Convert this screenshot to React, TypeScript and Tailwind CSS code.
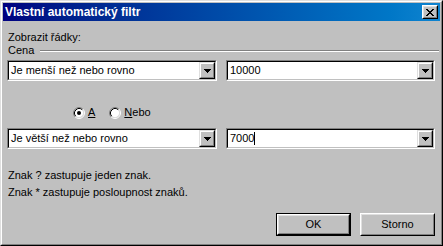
const font = "font-['Liberation_Sans',Arial,sans-serif]";

function DropButton() {
  return (
    <div className="flex h-full w-[16px] border border-t-[#dfdfdf] border-l-[#dfdfdf] border-b-black border-r-black bg-[#c0c0c0]">
      <div className="flex flex-1 items-center justify-center border border-t-white border-l-white border-b-[#808080] border-r-[#808080]">
        <svg width="7" height="4" viewBox="0 0 7 4" shapeRendering="crispEdges">
          <path d="M0 0h7v1H0zM1 1h5v1H1zM2 2h3v1H2zM3 3h1v1H3z" fill="#000" />
        </svg>
      </div>
    </div>
  );
}

function Combo({ value, cursor, className = "" }: { value: string; cursor?: boolean; className?: string }) {
  return (
    <div className={`flex h-[21px] border border-t-[#808080] border-l-[#808080] border-b-white border-r-white ${className}`}>
      <div className="flex flex-1 border border-t-black border-l-black border-b-[#c0c0c0] border-r-[#c0c0c0] bg-white">
        <div className="flex flex-1 items-center pl-[2px] text-[11px] leading-[13px] text-black">
          {value}
          {cursor && <span className="inline-block h-[13px] w-px bg-black" />}
        </div>
        <DropButton />
      </div>
    </div>
  );
}

function Radio({ checked }: { checked?: boolean }) {
  return (
    <svg width="12" height="12" viewBox="0 0 12 12">
      <circle cx="6" cy="6" r="4.5" fill="#fff" />
      <path d="M2.11 9.89A5.5 5.5 0 0 1 9.89 2.11" stroke="#808080" fill="none" />
      <path d="M9.89 2.11A5.5 5.5 0 0 1 2.11 9.89" stroke="#fff" fill="none" />
      <path d="M2.82 9.18A4.5 4.5 0 0 1 9.18 2.82" stroke="#000" fill="none" />
      <path d="M9.18 2.82A4.5 4.5 0 0 1 2.82 9.18" stroke="#dfdfdf" fill="none" />
      {checked && <circle cx="6" cy="6" r="2" fill="#000" />}
    </svg>
  );
}

function Button({ label, isDefault }: { label: string; isDefault?: boolean }) {
  const body = (
    <div className="flex flex-1 border border-t-white border-l-white border-b-black border-r-black">
      <div className="flex flex-1 items-center justify-center border border-t-[#dfdfdf] border-l-[#dfdfdf] border-b-[#808080] border-r-[#808080] text-[11px] leading-[13px] text-black">
        {label}
      </div>
    </div>
  );
  return isDefault ? (
    <div className="flex h-[23px] w-[75px] border border-black">{body}</div>
  ) : (
    <div className="flex h-[23px] w-[75px]">{body}</div>
  );
}

export default function App() {
  return (
    <div className={`${font} h-[246px] w-[443px] border border-t-[#dfdfdf] border-l-[#dfdfdf] border-b-black border-r-black bg-[#c0c0c0]`}>
      <div className="flex h-full flex-col border border-t-white border-l-white border-b-[#808080] border-r-[#808080] p-px">
        {/* Title bar */}
        <div className="flex h-[18px] items-center justify-between bg-gradient-to-r from-[#000080] to-[#1084d0] pl-[2px] pr-[2px]">
          <span className="text-[12px] font-bold leading-[14px] text-white">Vlastní automatický filtr</span>
          <div className="flex h-[14px] w-[16px] border border-t-white border-l-white border-b-black border-r-black bg-[#c0c0c0]">
            <div className="flex flex-1 items-center justify-center border border-t-[#dfdfdf] border-l-[#dfdfdf] border-b-[#808080] border-r-[#808080]">
              <svg width="8" height="7" viewBox="0 0 8 7" shapeRendering="crispEdges">
                <path d="M0 0h2v1H0zM1 1h2v1H1zM2 2h2v1H2zM3 3h2v1H3zM2 4h2v1H2zM1 5h2v1H1zM0 6h2v1H0zM6 0h2v1H6zM5 1h2v1H5zM4 2h2v1H4zM4 4h2v1H4zM5 5h2v1H5zM6 6h2v1H6z" fill="#000" />
              </svg>
            </div>
          </div>
        </div>

        {/* Content */}
        <div className="flex flex-col pl-[4px] pr-[5px] text-[11px] leading-[13px] text-black">
          <div className="mt-[10px] pl-[1px]">Zobrazit řádky:</div>
          <div className="flex h-[13px] items-center pl-[1px]">
            <span>Cena</span>
            <div className="-mr-[4px] ml-[6px] h-[2px] flex-1 border-t border-b border-t-[#808080] border-b-white" />
          </div>

          <div className="mt-[3px] flex gap-[9px]">
            <Combo value="Je menší než nebo rovno" className="w-[210px]" />
            <Combo value="10000" className="flex-1" />
          </div>

          <div className="mt-[25px] flex h-[13px] items-center pl-[66px]">
            <Radio checked />
            <span className="ml-[3px] underline underline-offset-1">A</span>
            <span className="ml-[14px] flex items-center">
              <Radio />
              <span className="ml-[3px]">
                <span className="underline underline-offset-1">N</span>ebo
              </span>
            </span>
          </div>

          <div className="mt-[9px] flex gap-[9px]">
            <Combo value="Je větší než nebo rovno" className="w-[210px]" />
            <Combo value="7000" cursor className="flex-1" />
          </div>

          <div className="mt-[20px] pl-[1px]">Znak ? zastupuje jeden znak.</div>
          <div className="mt-[4px] pl-[1px]">Znak * zastupuje posloupnost znaků.</div>

          <div className="mt-[14px] flex justify-end gap-[9px]">
            <Button label="OK" isDefault />
            <Button label="Storno" />
          </div>
        </div>
      </div>
    </div>
  );
}
